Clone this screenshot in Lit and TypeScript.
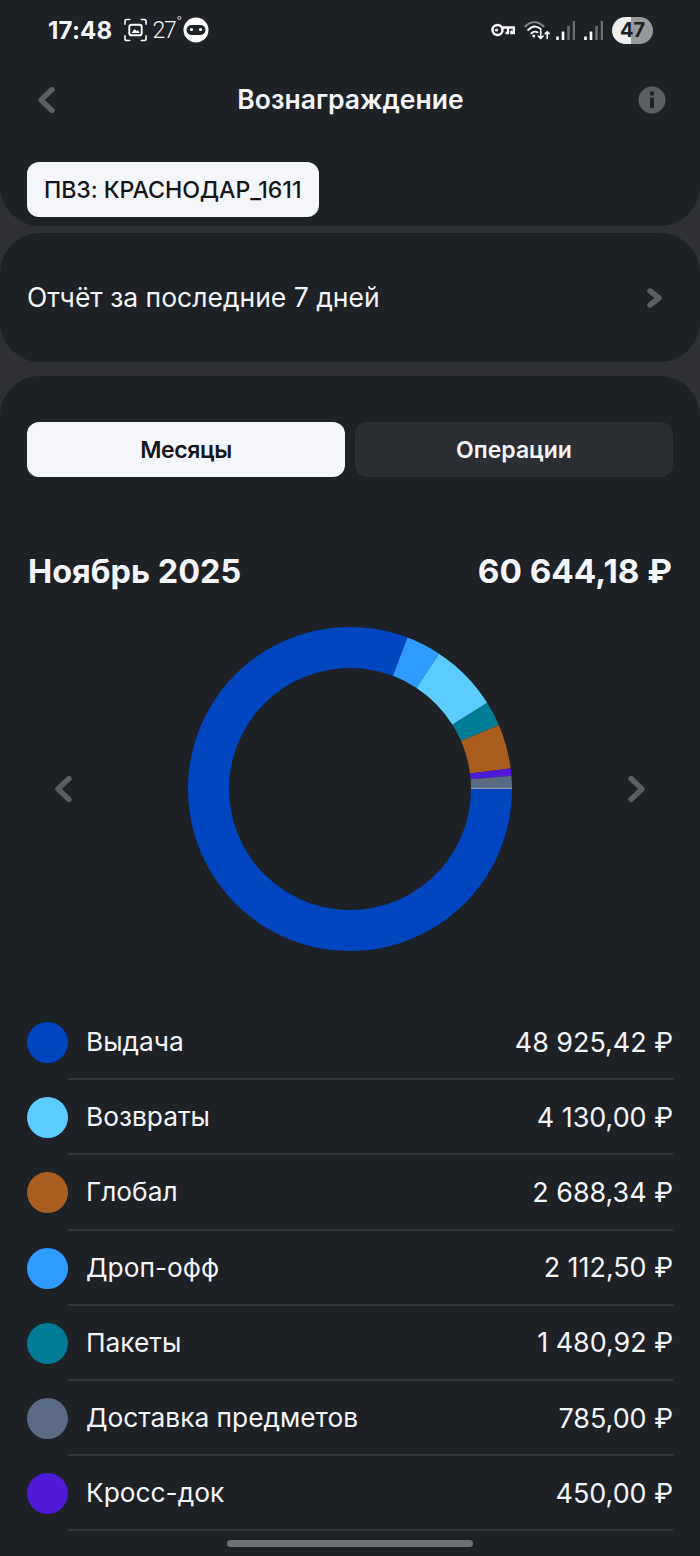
import { LitElement, html, css, svg } from 'lit';
import { customElement } from 'lit/decorators.js';

const rows = [
  { name: 'Выдача', value: 48925.42, text: '48 925,42 ₽', color: '#0046c0' },
  { name: 'Возвраты', value: 4130, text: '4 130,00 ₽', color: '#5ccbff' },
  { name: 'Глобал', value: 2688.34, text: '2 688,34 ₽', color: '#a85c1e' },
  { name: 'Дроп-офф', value: 2112.5, text: '2 112,50 ₽', color: '#2f9bff' },
  { name: 'Пакеты', value: 1480.92, text: '1 480,92 ₽', color: '#007d96' },
  { name: 'Доставка предметов', value: 785, text: '785,00 ₽', color: '#5a6a82' },
  { name: 'Кросс-док', value: 450, text: '450,00 ₽', color: '#4f1bd8' },
];

// order around the ring, clockwise from 3 o'clock
const ringOrder = [0, 3, 1, 4, 2, 6, 5];

function arc(r1: number, r2: number, from: number, to: number) {
  const p = (r: number, a: number) => {
    const t = (a * Math.PI) / 180;
    return `${(162 + r * Math.cos(t)).toFixed(2)} ${(162 + r * Math.sin(t)).toFixed(2)}`;
  };
  const large = to - from > 180 ? 1 : 0;
  return `M${p(r2, from)} A${r2} ${r2} 0 ${large} 1 ${p(r2, to)} L${p(r1, to)} A${r1} ${r1} 0 ${large} 0 ${p(r1, from)} Z`;
}

const chevron = (dir: 'left' | 'right') => html`
  <svg class="chev" width="22" height="30" viewBox="0 0 22 30" fill="none">
    <path
      d=${dir === 'left' ? 'M17 4.5 L6 15 L17 25.5' : 'M5 4.5 L16 15 L5 25.5'}
      stroke="currentColor"
      stroke-width="5.4"
      stroke-linecap="round"
      stroke-linejoin="round"
    />
  </svg>
`;

@customElement('app-root')
export class AppRoot extends LitElement {
  static styles = css`
    :host {
      display: block;
      width: 700px;
      height: 1556px;
      overflow: hidden;
      position: relative;
      background: #2f3135;
      font-family: Inter, 'Noto Sans', sans-serif;
      color: #f5f6fa;
    }
    .card {
      background: #1e2126;
    }
    .top {
      height: 226px;
      border-radius: 0 0 40px 40px;
      padding: 0 27px;
      box-sizing: border-box;
      margin-bottom: 7px;
    }
    .status {
      height: 60px;
      display: flex;
      align-items: center;
      justify-content: space-between;
      padding: 0 20px 0 21px;
    }
    .status-left,
    .status-right {
      display: flex;
      align-items: center;
    }
    .time {
      font-size: 24px;
      font-weight: 700;
      letter-spacing: 0.2px;
      margin-right: 12px;
    }
    .temp {
      font-family: Roboto, sans-serif;
      font-size: 23px;
      font-weight: 300;
      letter-spacing: -1.2px;
      margin: 0 2px 0 5px;
      display: flex;
    }
    .temp sup {
      font-size: 15px;
      line-height: 1;
      margin: -2px 0 0 1px;
    }
    .battery {
      width: 41px;
      height: 27px;
      border-radius: 14px;
      margin-left: 9px;
      background: linear-gradient(90deg, #eceded 0 47%, #98999b 47% 100%);
      color: #1e2126;
      font-size: 20px;
      font-weight: 700;
      display: flex;
      align-items: center;
      justify-content: center;
    }
    .nav {
      height: 80px;
      display: flex;
      align-items: center;
      justify-content: space-between;
      padding-right: 7px;
    }
    .nav .chev {
      color: #5b5e62;
      margin-left: 8px;
    }
    .nav h1 {
      margin: 0 0 2px 6px;
      font-size: 26.5px;
      font-weight: 600;
    }
    .pvz {
      display: inline-flex;
      align-items: center;
      height: 55px;
      margin-top: 22px;
      padding: 0 18px 0 17px;
      border-radius: 12px;
      background: #f5f6fa;
      color: #14161a;
      font-size: 23.2px;
      font-weight: 500;
      letter-spacing: -0.1px;
    }
    .report {
      height: 129px;
      border-radius: 40px;
      margin-bottom: 14px;
      padding: 0 36px 0 27px;
      box-sizing: border-box;
      display: flex;
      align-items: center;
      justify-content: space-between;
      font-size: 26.5px;
    }
    .report span {
      margin-bottom: 2px;
    }
    .report svg {
      color: #5b5e62;
    }
    .main {
      height: 1180px;
      border-radius: 40px 40px 0 0;
      padding: 46px 27px 0;
      box-sizing: border-box;
    }
    .tabs {
      display: grid;
      grid-template-columns: 1fr 1fr;
      gap: 10px;
    }
    .tab {
      height: 55px;
      border-radius: 12px;
      background: #2b2e33;
      display: flex;
      align-items: center;
      justify-content: center;
      font-size: 23px;
      font-weight: 600;
    }
    .tab.on {
      background: #f5f6fa;
      color: #14161a;
      letter-spacing: -0.4px;
    }
    .summary {
      display: flex;
      justify-content: space-between;
      align-items: center;
      margin-top: 70px;
      height: 48px;
      font-weight: 700;
    }
    .month {
      font-size: 32.4px;
      margin-left: 1px;
    }
    .total {
      font-size: 33.3px;
      margin-right: 1px;
    }
    .chart {
      display: flex;
      align-items: center;
      justify-content: space-between;
      margin-top: 32px;
      padding: 0 25px;
      height: 324px;
      color: #5b5e62;
    }
    .list {
      margin-top: 54px;
    }
    .row {
      display: flex;
      align-items: center;
      height: 75.2px;
    }
    .dot {
      width: 41px;
      height: 41px;
      border-radius: 50%;
      flex: none;
    }
    .row-body {
      flex: 1;
      height: 100%;
      box-sizing: border-box;
      border-bottom: 2px solid #34373b;
      display: flex;
      align-items: center;
      justify-content: space-between;
      padding-left: 18px;
      font-size: 26.3px;
      font-weight: 400;
    }
    .row-value {
      font-size: 26.9px;
    }
    .home {
      position: absolute;
      left: 227px;
      top: 1540px;
      width: 246px;
      height: 7px;
      border-radius: 4px;
      background: #6f7074;
    }
  `;

  private ring() {
    const total = rows.reduce((s, r) => s + r.value, 0);
    let a = 0;
    return svg`${ringOrder.map((i) => {
      const from = a;
      a += (rows[i].value / total) * 360;
      return svg`<path d=${arc(121, 162, from, a)} fill=${rows[i].color} />`;
    })}
    <path d="M283 161.4 H324" stroke="#8f98aa" stroke-width="1.4" />`;
  }

  render() {
    return html`
      <section class="card top">
        <div class="status">
          <div class="status-left">
            <span class="time">17:48</span>
            <svg width="23" height="24" viewBox="0 0 24 24" fill="none" stroke="#fff" stroke-width="1.6" stroke-linecap="round">
              <path d="M1 6 V3 Q1 1 3 1 H6 M18 1 H21 Q23 1 23 3 V6 M1 18 V21 Q1 23 3 23 H6 M18 23 H21 Q23 23 23 21 V18" />
              <rect x="5.5" y="6.5" width="13" height="11" rx="2.5" stroke-width="2" />
              <path d="M8 15 L11 11 L13 13 L14.5 12 L16.5 15 Z" fill="#fff" stroke="none" />
            </svg>
            <span class="temp">27<sup>°</sup></span>
            <svg width="26" height="26" viewBox="0 0 26 26">
              <circle cx="13" cy="13" r="12.5" fill="#fff" />
              <rect x="3.5" y="8" width="19" height="10" rx="5" fill="#1e2126" />
              <circle cx="8.5" cy="12.5" r="1.6" fill="#fff" />
              <circle cx="17.5" cy="12.5" r="1.6" fill="#fff" />
            </svg>
          </div>
          <div class="status-right">
            <svg width="24" height="16" viewBox="0 0 24 16" fill="none" stroke="#fff" stroke-width="2.4">
              <circle cx="6.5" cy="8" r="5" />
              <circle cx="5.5" cy="8" r="1" stroke-width="1.2" />
              <path d="M11.5 5.5 H23 V11 H20.5 V8.5 M17 5.5 V11 H14.5" />
            </svg>
            <svg style="margin-left:9px" width="26" height="24" viewBox="0 0 28 24" fill="none" stroke-linecap="round">
              <path d="M1.5 8 Q11 -1 21 8" stroke="#8b8c8f" stroke-width="2" />
              <path d="M4.5 12 Q11 5 18 11" stroke="#fff" stroke-width="2" />
              <path d="M8 15.5 Q11 12.5 14.5 14.5" stroke="#fff" stroke-width="2" />
              <circle cx="10.5" cy="18.5" r="1.6" fill="#fff" />
              <path d="M18 13 V21 M15.5 18.5 L18 21 L20.5 18.5" stroke="#fff" stroke-width="1.8" />
              <path d="M25 21 V14 M23 16 L25 14 L27 16" stroke="#fff" stroke-width="1.8" />
            </svg>
            <svg style="margin-left:6px" width="19" height="20" viewBox="0 0 19 20" stroke-width="2.6">
              <path d="M1.5 20 V16.5" stroke="#fff" />
              <path d="M7 20 V11.5" stroke="#fff" />
              <path d="M12.5 20 V6" stroke="#6b6c6f" />
              <path d="M18 20 V1" stroke="#6b6c6f" />
            </svg>
            <svg style="margin-left:9px" width="19" height="20" viewBox="0 0 19 20" stroke-width="2.6">
              <path d="M1.5 20 V16.5" stroke="#fff" />
              <path d="M7 20 V11.5" stroke="#fff" />
              <path d="M12.5 20 V6" stroke="#6b6c6f" />
              <path d="M18 20 V1" stroke="#6b6c6f" />
            </svg>
            <div class="battery">47</div>
          </div>
        </div>
        <div class="nav">
          ${chevron('left')}
          <h1>Вознаграждение</h1>
          <svg width="28" height="28" viewBox="0 0 28 28">
            <circle cx="14" cy="14" r="13.5" fill="#5b5e62" />
            <circle cx="14" cy="7.5" r="2.2" fill="#1e2126" />
            <rect x="12" y="11.5" width="4" height="10.5" rx="1.2" fill="#1e2126" />
          </svg>
        </div>
        <div class="pvz">ПВЗ: КРАСНОДАР_1611</div>
      </section>

      <section class="card report">
        <span>Отчёт за последние 7 дней</span>
        <svg width="18" height="24" viewBox="0 0 18 24" fill="none">
          <path d="M4 5 L13 12 L4 19" stroke="currentColor" stroke-width="5.4" stroke-linecap="round" stroke-linejoin="round" />
        </svg>
      </section>

      <section class="card main">
        <div class="tabs">
          <div class="tab on">Месяцы</div>
          <div class="tab">Операции</div>
        </div>
        <div class="summary">
          <span class="month">Ноябрь 2025</span>
          <span class="total">60 644,18 ₽</span>
        </div>
        <div class="chart">
          ${chevron('left')}
          <svg width="324" height="324" viewBox="0 0 324 324">${this.ring()}</svg>
          ${chevron('right')}
        </div>
        <div class="list">
          ${rows.map(
            (r) => html`
              <div class="row">
                <span class="dot" style="background:${r.color}"></span>
                <div class="row-body">
                  <span>${r.name}</span>
                  <span class="row-value">${r.text}</span>
                </div>
              </div>
            `,
          )}
        </div>
      </section>
      <div class="home"></div>
    `;
  }
}
